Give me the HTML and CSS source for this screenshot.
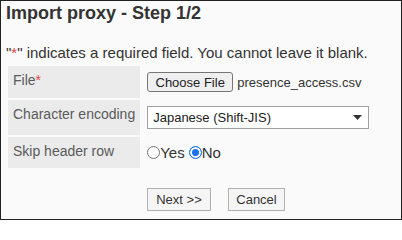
FILE: index.html
```html
<!DOCTYPE html>
<html>
<head>
<meta charset="utf-8">
<link rel="stylesheet" href="styles.css">
</head>
<body>
<div class="page">
  <h1 class="title">Import proxy - Step 1/2</h1>
  <p class="note">"<span class="req">*</span>" indicates a required field. You cannot leave it blank.</p>
  <table class="form">
    <tr>
      <th class="label">File<span class="req">*</span></th>
      <td class="value">
        <div class="file-row">
          <span class="btn btn-file">Choose File</span>
          <span class="filename">presence_access.csv</span>
        </div>
      </td>
    </tr>
    <tr>
      <th class="label">Character encoding</th>
      <td class="value">
        <div class="select">
          <span class="select-text">Japanese (Shift-JIS)</span>
          <svg class="select-arrow" width="9" height="5" viewBox="0 0 9 5"><path d="M0 0H9L4.5 5Z" fill="#333"/></svg>
        </div>
      </td>
    </tr>
    <tr>
      <th class="label">Skip header row</th>
      <td class="value">
        <div class="radios">
          <span class="radio"></span><span class="radio-label">Yes</span>
          <span class="radio on"></span><span class="radio-label">No</span>
        </div>
      </td>
    </tr>
  </table>
  <div class="actions">
    <span class="btn btn-action btn-next">Next &gt;&gt;</span>
    <span class="btn btn-action btn-cancel">Cancel</span>
  </div>
</div>
</body>
</html>
```
FILE: styles.css
```css
html, body {
  margin: 0;
  padding: 0;
}
body {
  font-family: "Liberation Sans", Arial, sans-serif;
  color: #333;
}
.page {
  box-sizing: border-box;
  width: 402px;
  height: 220px;
  border: 1px solid #222;
  background: #fafafa;
  padding: 1px 5px 0 5px;
}
.title {
  margin: 0;
  font-size: 18px;
  line-height: 22px;
  font-weight: bold;
  color: #333;
}
.note {
  margin: 20px 0 0 0;
  font-size: 15px;
  line-height: 17px;
  color: #333;
}
.req {
  color: #e8433f;
}
.form {
  margin-top: 3px;
  border-collapse: separate;
  border-spacing: 2px;
}
.label {
  width: 122px;
  white-space: nowrap;
  background: #ebebeb;
  color: #5a5a5a;
  font-weight: normal;
  text-align: left;
  vertical-align: top;
  font-size: 14px;
  line-height: 16px;
  padding: 6px 5px;
}
.value {
  vertical-align: top;
  padding: 6px 5px;
  font-size: 13px;
}
.file-row {
  display: flex;
  align-items: center;
  gap: 4px;
  height: 20px;
}
.btn {
  box-sizing: border-box;
  display: inline-flex;
  align-items: center;
  justify-content: center;
  font-size: 13px;
  color: #222;
}
.btn-file {
  width: 86px;
  height: 20px;
  border: 1px solid #767676;
  border-radius: 3px;
  background: #efefef;
}
.filename {
  color: #333;
}
.select {
  box-sizing: border-box;
  width: 222px;
  height: 23px;
  border: 1px solid #a0a0a0;
  background: #fff;
  display: flex;
  align-items: center;
  justify-content: space-between;
  padding: 0 6px 0 5px;
  color: #222;
}
.select-arrow {
  display: block;
}
.radios {
  display: flex;
  align-items: center;
  height: 19px;
  font-size: 15px;
}
.radio {
  box-sizing: border-box;
  width: 13px;
  height: 13px;
  border-radius: 50%;
  border: 1px solid #767676;
  background: #fff;
}
.radio.on {
  border: 1px solid #1a73e8;
  background: #1a73e8;
  box-shadow: inset 0 0 0 2px #fff;
}
.radio-label {
  margin-right: 4px;
  color: #333;
}
.actions {
  display: flex;
  gap: 17px;
  margin: 18px 0 0 141px;
}
.btn-action {
  height: 23px;
  border: 1px solid #b0b0b0;
  background: #f5f5f5;
  color: #333;
}
.btn-next {
  width: 64px;
}
.btn-cancel {
  width: 57px;
}
```
